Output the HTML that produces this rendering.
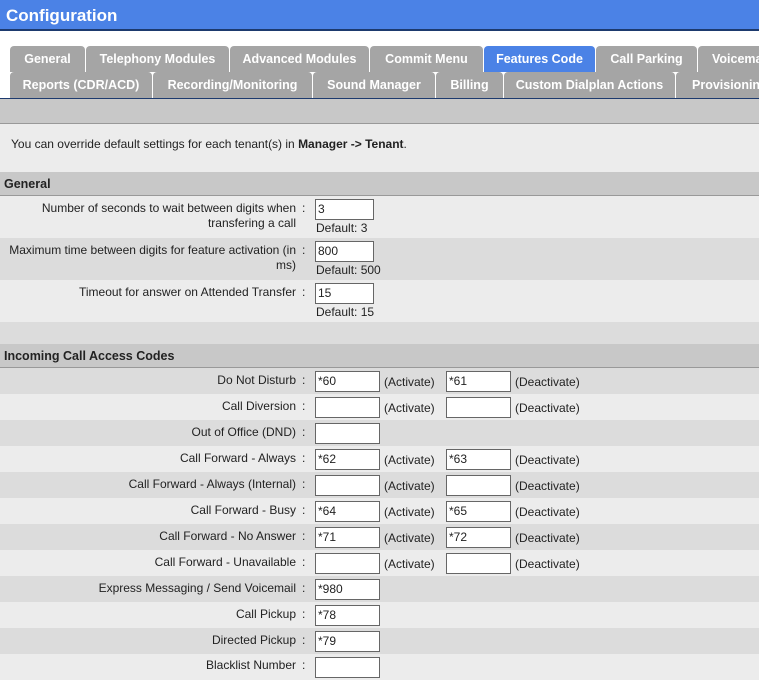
<!DOCTYPE html>
<html><head><style>
*{margin:0;padding:0;box-sizing:border-box}
body{width:759px;height:667px;overflow:hidden;background:#fff;font-family:"Liberation Sans",sans-serif;font-size:12px;color:#222;position:relative}
.a{position:absolute}
.hdr{left:0;top:0;width:759px;height:31px;background:#4b82e6;border-bottom:2px solid #1d3a6e;color:#fff;font-weight:bold;font-size:17px;padding:6px 0 0 6px}
.tab{position:absolute;height:26px;background:#a5a5a5;color:#fff;font-weight:bold;font-size:12.5px;text-align:center;line-height:27px;border-radius:4px 4px 0 0;white-space:nowrap;overflow:hidden}
.r2{height:27px}
.act{background:#4b82e6}
.row{position:absolute;left:0;width:759px}
.lab{position:absolute;right:463px;text-align:right;line-height:15px}
.col{position:absolute;left:302px}
.in{position:absolute;width:65px;height:21px;background:#fff;border:1px solid #666;padding:2px 2px;font-size:12px;line-height:15px}
.t{position:absolute}
</style></head><body>
<div class="a hdr">Configuration</div>
<div class="tab" style="left:10px;top:46px;width:75px">General</div>
<div class="tab" style="left:86px;top:46px;width:143px">Telephony Modules</div>
<div class="tab" style="left:230px;top:46px;width:139px">Advanced Modules</div>
<div class="tab" style="left:370px;top:46px;width:113px">Commit Menu</div>
<div class="tab act" style="left:484px;top:46px;width:111px">Features Code</div>
<div class="tab" style="left:596px;top:46px;width:101px">Call Parking</div>
<div class="tab" style="left:698px;top:46px;width:80px;text-align:left;padding-left:14px">Voicemail</div>
<div class="tab r2" style="left:10px;top:72px;width:142px">Reports (CDR/ACD)</div>
<div class="tab r2" style="left:153px;top:72px;width:159px">Recording/Monitoring</div>
<div class="tab r2" style="left:313px;top:72px;width:122px">Sound Manager</div>
<div class="tab r2" style="left:436px;top:72px;width:67px">Billing</div>
<div class="tab r2" style="left:504px;top:72px;width:171px">Custom Dialplan Actions</div>
<div class="tab r2" style="left:676px;top:72px;width:100px;text-align:left;padding-left:16px">Provisioning</div>
<div class="row" style="top:98px;height:1px;background:#1d3a6e"></div>
<div class="row" style="top:99px;height:25px;background:#c8c8c8;border-bottom:1px solid #999"></div>
<div class="row" style="top:124px;height:48px;background:#ececec"><div class="t" style="left:11px;top:13px">You can override default settings for each tenant(s) in <b>Manager -&gt; Tenant</b>.</div></div>
<div class="row" style="top:172px;height:24px;background:#c8c8c8;border-bottom:1px solid #999;font-weight:bold;font-size:12.5px;padding:5px 0 0 4px">General</div>

<div class="row" style="top:196px;height:42px;background:#ececec">
<div class="lab" style="top:5px;width:300px">Number of seconds to wait between digits when transfering a call</div><div class="col" style="top:5px">:</div>
<div class="in" style="left:315px;top:3px;width:59px">3</div><div class="t" style="left:316px;top:25px">Default: 3</div></div>
<div class="row" style="top:238px;height:42px;background:#dcdcdc">
<div class="lab" style="top:5px;width:300px">Maximum time between digits for feature activation (in ms)</div><div class="col" style="top:5px">:</div>
<div class="in" style="left:315px;top:3px;width:59px">800</div><div class="t" style="left:316px;top:25px">Default: 500</div></div>
<div class="row" style="top:280px;height:42px;background:#ececec">
<div class="lab" style="top:5px;width:300px">Timeout for answer on Attended Transfer</div><div class="col" style="top:5px">:</div>
<div class="in" style="left:315px;top:3px;width:59px">15</div><div class="t" style="left:316px;top:25px">Default: 15</div></div>
<div class="row" style="top:322px;height:22px;background:#dcdcdc"></div>
<div class="row" style="top:344px;height:24px;background:#c8c8c8;border-bottom:1px solid #999;font-weight:bold;font-size:12.5px;padding:5px 0 0 4px">Incoming Call Access Codes</div>

<div class="row" style="top:368px;height:26px;background:#dcdcdc"><div class="lab" style="top:5px">Do Not Disturb</div><div class="col" style="top:5px">:</div><div class="in" style="left:315px;top:3px">*60</div><div class="t" style="left:384px;top:7px">(Activate)</div><div class="in" style="left:446px;top:3px">*61</div><div class="t" style="left:515px;top:7px">(Deactivate)</div></div>
<div class="row" style="top:394px;height:26px;background:#ececec"><div class="lab" style="top:5px">Call Diversion</div><div class="col" style="top:5px">:</div><div class="in" style="left:315px;top:3px"></div><div class="t" style="left:384px;top:7px">(Activate)</div><div class="in" style="left:446px;top:3px"></div><div class="t" style="left:515px;top:7px">(Deactivate)</div></div>
<div class="row" style="top:420px;height:26px;background:#dcdcdc"><div class="lab" style="top:5px">Out of Office (DND)</div><div class="col" style="top:5px">:</div><div class="in" style="left:315px;top:3px"></div></div>
<div class="row" style="top:446px;height:26px;background:#ececec"><div class="lab" style="top:5px">Call Forward - Always</div><div class="col" style="top:5px">:</div><div class="in" style="left:315px;top:3px">*62</div><div class="t" style="left:384px;top:7px">(Activate)</div><div class="in" style="left:446px;top:3px">*63</div><div class="t" style="left:515px;top:7px">(Deactivate)</div></div>
<div class="row" style="top:472px;height:26px;background:#dcdcdc"><div class="lab" style="top:5px">Call Forward - Always (Internal)</div><div class="col" style="top:5px">:</div><div class="in" style="left:315px;top:3px"></div><div class="t" style="left:384px;top:7px">(Activate)</div><div class="in" style="left:446px;top:3px"></div><div class="t" style="left:515px;top:7px">(Deactivate)</div></div>
<div class="row" style="top:498px;height:26px;background:#ececec"><div class="lab" style="top:5px">Call Forward - Busy</div><div class="col" style="top:5px">:</div><div class="in" style="left:315px;top:3px">*64</div><div class="t" style="left:384px;top:7px">(Activate)</div><div class="in" style="left:446px;top:3px">*65</div><div class="t" style="left:515px;top:7px">(Deactivate)</div></div>
<div class="row" style="top:524px;height:26px;background:#dcdcdc"><div class="lab" style="top:5px">Call Forward - No Answer</div><div class="col" style="top:5px">:</div><div class="in" style="left:315px;top:3px">*71</div><div class="t" style="left:384px;top:7px">(Activate)</div><div class="in" style="left:446px;top:3px">*72</div><div class="t" style="left:515px;top:7px">(Deactivate)</div></div>
<div class="row" style="top:550px;height:26px;background:#ececec"><div class="lab" style="top:5px">Call Forward - Unavailable</div><div class="col" style="top:5px">:</div><div class="in" style="left:315px;top:3px"></div><div class="t" style="left:384px;top:7px">(Activate)</div><div class="in" style="left:446px;top:3px"></div><div class="t" style="left:515px;top:7px">(Deactivate)</div></div>
<div class="row" style="top:576px;height:26px;background:#dcdcdc"><div class="lab" style="top:5px">Express Messaging / Send Voicemail</div><div class="col" style="top:5px">:</div><div class="in" style="left:315px;top:3px">*980</div></div>
<div class="row" style="top:602px;height:26px;background:#ececec"><div class="lab" style="top:5px">Call Pickup</div><div class="col" style="top:5px">:</div><div class="in" style="left:315px;top:3px">*78</div></div>
<div class="row" style="top:628px;height:26px;background:#dcdcdc"><div class="lab" style="top:5px">Directed Pickup</div><div class="col" style="top:5px">:</div><div class="in" style="left:315px;top:3px">*79</div></div>
<div class="row" style="top:654px;height:26px;background:#ececec"><div class="lab" style="top:4px">Blacklist Number</div><div class="col" style="top:4px">:</div><div class="in" style="left:315px;top:3px"></div></div>
</body></html>
